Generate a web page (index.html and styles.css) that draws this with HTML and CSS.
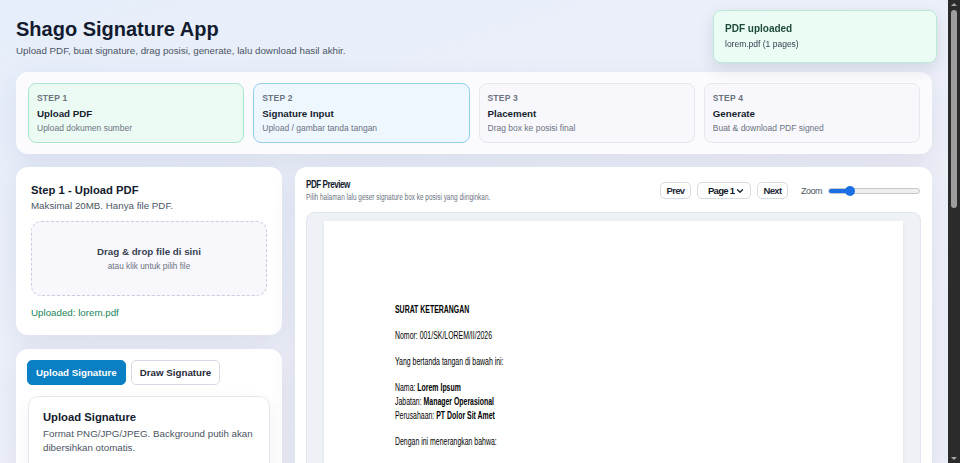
FILE: index.html
```html
<!DOCTYPE html>
<html lang="id">
<head>
    <meta charset="UTF-8">
    <meta name="viewport" content="width=device-width, initial-scale=1.0">
    <title>Shago Signature App</title>
    <link rel="stylesheet" href="styles.css">
</head>
<body>
    <div class="toast">
        <div class="toast-title">PDF uploaded</div>
        <div class="toast-text">lorem.pdf (1 pages)</div>
    </div>

    <main class="app">
        <header class="app-header">
            <h1 class="app-title">Shago Signature App</h1>
            <p class="app-subtitle">Upload PDF, buat signature, drag posisi, generate, lalu download hasil akhir.</p>
        </header>

        <section class="card steps">
            <div class="step step-done">
                <div class="step-label">STEP 1</div>
                <div class="step-name">Upload PDF</div>
                <div class="step-desc">Upload dokumen sumber</div>
            </div>
            <div class="step step-active">
                <div class="step-label">STEP 2</div>
                <div class="step-name">Signature Input</div>
                <div class="step-desc">Upload / gambar tanda tangan</div>
            </div>
            <div class="step">
                <div class="step-label">STEP 3</div>
                <div class="step-name">Placement</div>
                <div class="step-desc">Drag box ke posisi final</div>
            </div>
            <div class="step">
                <div class="step-label">STEP 4</div>
                <div class="step-name">Generate</div>
                <div class="step-desc">Buat &amp; download PDF signed</div>
            </div>
        </section>

        <div class="workspace">
            <aside class="sidebar">
                <section class="card panel">
                    <h2 class="panel-title">Step 1 - Upload PDF</h2>
                    <p class="panel-note">Maksimal 20MB. Hanya file PDF.</p>
                    <div class="dropzone">
                        <div class="dropzone-title">Drag &amp; drop file di sini</div>
                        <div class="dropzone-hint">atau klik untuk pilih file</div>
                    </div>
                    <p class="uploaded">Uploaded: lorem.pdf</p>
                </section>

                <section class="card panel panel-sig">
                    <div class="tabs">
                        <button class="tab tab-active">Upload Signature</button>
                        <button class="tab">Draw Signature</button>
                    </div>
                    <div class="sig-card">
                        <h3 class="sig-title">Upload Signature</h3>
                        <p class="sig-note">Format PNG/JPG/JPEG. Background putih akan dibersihkan otomatis.</p>
                        <div class="dropzone dropzone-small">
                            <div class="dropzone-title">Pilih gambar signature</div>
                            <div class="dropzone-hint">PNG, JPG atau JPEG</div>
                        </div>
                    </div>
                </section>
            </aside>

            <section class="card preview-panel">
                <div class="preview-head">
                    <div class="preview-heading">
                        <h2 class="preview-title">PDF Preview</h2>
                        <p class="preview-note">Pilih halaman lalu geser signature box ke posisi yang diinginkan.</p>
                    </div>
                    <div class="controls">
                        <button class="ctl">Prev</button>
                        <button class="ctl ctl-select">Page 1
                            <svg width="8" height="8" viewBox="0 0 8 8"><path d="M1.5 2.8 L4 5.3 L6.5 2.8" fill="none" stroke="#1f2937" stroke-width="1.4" stroke-linecap="round" stroke-linejoin="round"/></svg>
                        </button>
                        <button class="ctl">Next</button>
                        <span class="zoom-label">Zoom</span>
                        <input class="zoom" type="range" min="0" max="100" value="20">
                    </div>
                </div>

                <div class="preview-area">
                    <div class="pdf-page">
                        <div class="pdf-text">
                            <p><b>SURAT KETERANGAN</b></p>
                            <p>Nomor: 001/SK/LOREM/II/2026</p>
                            <p>Yang bertanda tangan di bawah ini:</p>
                            <p>Nama: <b>Lorem Ipsum</b><br>Jabatan: <b>Manager Operasional</b><br>Perusahaan: <b>PT Dolor Sit Amet</b></p>
                            <p>Dengan ini menerangkan bahwa:</p>
                            <p>Nama: <b>Consectetur Adipiscing</b><br>Jabatan: <b>Staff Administrasi</b><br>Alamat: <b>Jl. Lorem Ipsum No. 12</b></p>
                            <p>Adalah benar karyawan aktif pada perusahaan kami.</p>
                            <p>Demikian surat keterangan ini dibuat untuk dipergunakan sebagaimana mestinya.</p>
                            <p>Jakarta, 12 Februari 2026</p>
                            <p><b>Lorem Ipsum</b><br>Manager Operasional</p>
                        </div>
                    </div>
                </div>
            </section>
        </div>
    </main>

    <div class="page-rail">
        <span class="rail-arrow rail-up"></span>
        <span class="rail-thumb"></span>
        <span class="rail-arrow rail-down"></span>
    </div>
</body>
</html>
```

FILE: styles.css
```css
html {
    background: linear-gradient(160deg, #e6eefb 0%, #eef0f8 35%, #eceef6 100%);
    min-height: 100%;
}
body {
    margin: 0;
    padding: 0 0 16px 16px;
    display: flex;
    align-items: flex-start;
    font-family: "Liberation Sans", Arial, sans-serif;
    color: #111827;
}
h1, h2, h3, p {
    margin: 0;
}
button {
    font-family: inherit;
    cursor: pointer;
}

.app {
    flex: 1;
    min-width: 0;
    margin-right: 16px;
}

/* window scroll rail as seen in the capture */
.page-rail {
    position: sticky;
    top: 0;
    flex: none;
    width: 12px;
    height: 463px;
    background-color: #2b2b2b;
}
.rail-thumb {
    position: absolute;
    top: 10px;
    left: 3px;
    width: 6px;
    height: 198px;
    border-radius: 3px;
    background-color: #9e9e9e;
}
.rail-arrow {
    position: absolute;
    left: 3px;
    width: 0;
    height: 0;
    border-left: 3px solid transparent;
    border-right: 3px solid transparent;
}
.rail-up {
    top: 3px;
    border-bottom: 3px solid #a8a8a8;
}
.rail-down {
    bottom: 3px;
    border-top: 3px solid #a8a8a8;
}

.app-header {
    padding-top: 17px;
}
.app-title {
    font-size: 20px;
    line-height: 24px;
    font-weight: bold;
    color: #131b2e;
}
.app-subtitle {
    margin-top: 3px;
    font-size: 9.75px;
    line-height: 13px;
    color: #4b5563;
}

.toast {
    position: fixed;
    top: 10px;
    right: 23px;
    width: 200px;
    padding: 11px 11px 12px;
    background: #ebfcf5;
    border: 1px solid #b7ebd4;
    border-radius: 8px;
    box-shadow: 0 6px 16px rgba(30, 41, 80, 0.12);
    z-index: 10;
}
.toast-title {
    font-size: 10px;
    line-height: 14px;
    font-weight: bold;
    color: #1d4c39;
}
.toast-text {
    margin-top: 3px;
    font-size: 8.5px;
    line-height: 11px;
    color: #374151;
}

.card {
    background: #fff;
    border-radius: 12px;
    box-shadow: 0 10px 28px rgba(40, 52, 110, 0.09);
}

.steps {
    margin-top: 15px;
    padding: 11px 12px;
    display: grid;
    grid-template-columns: repeat(4, 1fr);
    gap: 9px;
    background: #fbfbfe;
}
.step {
    height: 60px;
    box-sizing: border-box;
    padding: 9px 8px 0;
    border: 1px solid #e6e8f0;
    border-radius: 8px;
    background: #f8f8fc;
}
.step-done {
    background: #ebfbf4;
    border-color: #a9e7cd;
}
.step-active {
    background: #eef6fe;
    border-color: #95cfee;
}
.step-label {
    font-size: 8.5px;
    line-height: 11px;
    font-weight: bold;
    color: #6b7280;
    letter-spacing: 0.2px;
}
.step-name {
    margin-top: 3px;
    font-size: 9.75px;
    line-height: 13px;
    font-weight: bold;
    color: #161e2e;
}
.step-desc {
    margin-top: 3px;
    font-size: 8.5px;
    line-height: 11px;
    color: #6b7280;
}

.workspace {
    margin-top: 13px;
    display: grid;
    grid-template-columns: 266px minmax(0, 1fr);
    gap: 13px;
    align-items: start;
}
.sidebar {
    display: flex;
    flex-direction: column;
    gap: 14px;
}
.panel {
    padding: 16px 15px 16px;
}
.panel-title {
    font-size: 11.25px;
    line-height: 15px;
    font-weight: bold;
    color: #131b2e;
}
.panel-note {
    margin-top: 1px;
    font-size: 9.75px;
    line-height: 13px;
    color: #4b5563;
}
.dropzone {
    margin-top: 9px;
    height: 75px;
    box-sizing: border-box;
    display: flex;
    flex-direction: column;
    align-items: center;
    justify-content: center;
    gap: 3px;
    border: 1.5px dashed #c9cde0;
    border-radius: 10px;
    background: #f8f8fc;
}
.dropzone-title {
    font-size: 9.75px;
    line-height: 13px;
    font-weight: bold;
    color: #374151;
}
.dropzone-hint {
    font-size: 8.25px;
    line-height: 11px;
    color: #6b7280;
}
.uploaded {
    margin-top: 10px;
    font-size: 9.75px;
    line-height: 13px;
    color: #23855a;
}

.panel-sig {
    padding: 11px 12px 14px 11px;
}
.tabs {
    display: flex;
    gap: 5px;
}
.tab {
    height: 25px;
    padding: 0 8px;
    font-size: 9.75px;
    font-weight: bold;
    color: #1f2937;
    background: #fff;
    border: 1px solid #d6dae3;
    border-radius: 5px;
}
.tab-active {
    color: #fff;
    background: #0a7fc3;
    border-color: #0a7fc3;
}
.sig-card {
    margin-top: 11px;
    margin-left: 1px;
    padding: 13px 14px 14px;
    border: 1px solid #e6e8f0;
    border-radius: 10px;
    box-shadow: 0 6px 16px rgba(40, 52, 110, 0.07);
}
.sig-title {
    font-size: 11.25px;
    line-height: 15px;
    font-weight: bold;
    color: #131b2e;
}
.sig-note {
    margin-top: 2px;
    font-size: 9.75px;
    line-height: 14px;
    color: #4b5563;
}
.dropzone-small {
    height: 60px;
}

.preview-panel {
    padding: 11px;
}
.preview-head {
    display: flex;
    justify-content: space-between;
    align-items: center;
}
/* the preview header text is rendered condensed */
.preview-heading {
    transform: scaleX(0.77);
    transform-origin: left center;
}
.preview-title {
    font-size: 10.5px;
    line-height: 13px;
    font-weight: bold;
    letter-spacing: -0.6px;
    color: #131b2e;
}
.preview-note {
    margin-top: 1px;
    font-size: 8.4px;
    line-height: 10.5px;
    color: #6b7280;
    white-space: nowrap;
}
.controls {
    display: flex;
    align-items: center;
    gap: 6px;
    padding-right: 1px;
    padding-top: 1px;
}
.ctl {
    width: 31px;
    height: 17px;
    padding: 0;
    display: flex;
    align-items: center;
    justify-content: center;
    white-space: nowrap;
    font-size: 9.5px;
    font-weight: bold;
    letter-spacing: -0.7px;
    color: #1f2937;
    background: #fff;
    border: 1px solid #d6dae3;
    border-radius: 5px;
}
.ctl-select {
    width: 54px;
    padding: 0 6px 0 10px;
    justify-content: space-between;
    color: #111827;
}
.zoom-label {
    margin-left: 7px;
    font-size: 9px;
    letter-spacing: -0.5px;
    color: #4b5563;
}
.zoom {
    -webkit-appearance: none;
    appearance: none;
    width: 90px;
    height: 4px;
    margin: 0;
    border: 1px solid #c4c7ce;
    border-radius: 3px;
    background: linear-gradient(to right, #1b6fe4 22%, #efefef 22%);
}
.zoom::-webkit-slider-thumb {
    -webkit-appearance: none;
    width: 10px;
    height: 10px;
    border-radius: 50%;
    background: #1b6fe4;
}

.preview-area {
    margin-top: 9px;
    padding: 8px 17px 9px;
    background: #eef1f6;
    border: 1px solid #e2e6ee;
    border-radius: 8px;
}
.pdf-page {
    height: 776px;
    box-sizing: border-box;
    padding: 81px 0 0 71px;
    background: #fff;
    box-shadow: 0 1px 3px rgba(15, 23, 42, 0.08);
    overflow: hidden;
}
.pdf-text {
    width: 700px;
    font-size: 11px;
    line-height: 14px;
    color: #000;
    transform: scaleX(0.63);
    transform-origin: left top;
}
.pdf-text p {
    margin-bottom: 12px;
}
```
